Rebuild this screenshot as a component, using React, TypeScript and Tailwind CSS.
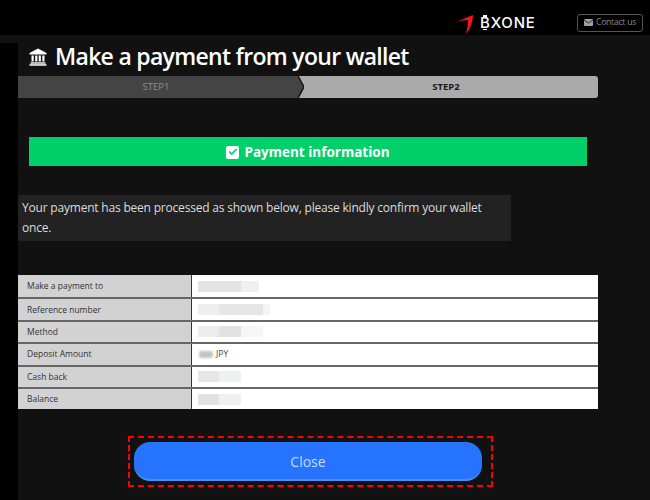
import { Check } from 'lucide-react'

const rows = [
  { label: 'Make a payment to', blur: [[43, 'bg-[#e4e4e4]'], [18, 'bg-[#f0f0f0]']] },
  { label: 'Reference number', blur: [[21, 'bg-[#eeeeee]'], [44, 'bg-[#e6e6e6]'], [7, 'bg-[#f4f4f4]']] },
  { label: 'Method', blur: [[21, 'bg-[#ececec]'], [22, 'bg-[#e2e2e2]'], [22, 'bg-[#f6f6f6]']] },
  { label: 'Deposit Amount', blur: [], amount: true },
  { label: 'Cash back', blur: [[21, 'bg-[#e6e6e6]'], [22, 'bg-[#eff1f1]']] },
  { label: 'Balance', blur: [[21, 'bg-[#e2e2e2]'], [22, 'bg-[#f0f0f0]']] },
] as { label: string; blur: [number, string][]; amount?: boolean }[]

function BankIcon() {
  return (
    <svg width="18" height="18" viewBox="0 0 18 18" fill="#fff" aria-hidden="true">
      <path d="M9 0.5 L17.5 5 V6.5 H0.5 V5 Z" />
      <rect x="2.5" y="7.5" width="2.2" height="6" />
      <rect x="6.2" y="7.5" width="2.2" height="6" />
      <rect x="9.7" y="7.5" width="2.2" height="6" />
      <rect x="13.3" y="7.5" width="2.2" height="6" />
      <rect x="1.5" y="14.3" width="15" height="1.4" />
      <rect x="0.5" y="16.2" width="17" height="1.5" />
    </svg>
  )
}

function Logo() {
  return (
    <div className="flex w-[83px] items-center">
      <svg width="20" height="21" viewBox="0 0 20 21" className="translate-y-[2px]" aria-hidden="true">
        <path d="M0 9 L19 1 C19 8 16 15 12 20 C13 15 14 11 14 6 C9 6 5 7 0 9 Z" fill="#f5151c" />
      </svg>
      <span className="relative ml-[6px] font-['Inter',sans-serif] text-[15px] font-medium tracking-[0.8px] text-white leading-none">
        BXONE
        <span className="absolute left-[3px] top-[0px] h-[1.5px] w-[4px] bg-white" />
        <span className="absolute bottom-[0px] left-[3px] h-[1.5px] w-[4px] bg-white" />
      </span>
    </div>
  )
}

export default function App() {
  return (
    <div className="flex h-[500px] w-[650px] flex-col overflow-hidden bg-[#111111] font-['Open_Sans',sans-serif]">
      <header className="flex h-[35px] shrink-0 items-center bg-black pl-[454px] pt-[10px]">
        <Logo />
        <div className="ml-[40px] flex h-[18px] w-[66px] items-center justify-center gap-[3px] rounded-[3px] border border-[#555555] text-[#8a8a8a]">
          <svg width="9" height="7" viewBox="0 0 9 7" aria-hidden="true">
            <rect width="9" height="7" rx="1" fill="#a0a0a0" />
            <path d="M0 1 L4.5 4 L9 1" fill="none" stroke="#000000" strokeWidth="0.7" />
          </svg>
          <span className="text-[8.5px] tracking-[-0.2px] leading-none">Contact us</span>
        </div>
      </header>

      <div className="flex flex-1">
        <div className="mt-[8px] w-[18px] shrink-0 bg-black" />

        <main className="w-[580px]">
          <h1 className="flex h-[41px] items-center gap-[8px] pl-[11px] pt-[2px] text-[23px] font-semibold tracking-[-0.7px] leading-none text-white">
            <BankIcon />
            <span>Make a payment from your wallet</span>
          </h1>

          <div className="flex h-[22px] overflow-hidden rounded-[3px] bg-[#aaaaaa] text-[9.5px] leading-none">
            <div className="flex w-[280px] items-center justify-center bg-[#444444] pr-[4px] text-[#8d8d8d]">STEP1</div>
            <svg width="6" height="22" viewBox="0 0 6 22" className="shrink-0" aria-hidden="true">
              <path d="M0 0 L6 11 L0 22 Z" fill="#444444" />
              <path d="M0 0 L6 11 L0 22" fill="none" stroke="#111111" strokeWidth="1.5" />
            </svg>
            <div className="flex flex-1 items-center justify-center pr-[10px] font-bold text-[#1a1a1a]">STEP2</div>
          </div>

          <div className="ml-[11px] mt-[39px] flex h-[29px] w-[558px] items-center justify-center gap-[5px] bg-[#00cf6a] pt-[1px] text-[13.5px] font-bold text-white">
            <span className="flex h-[13px] w-[13px] items-center justify-center rounded-[2px] bg-white">
              <Check size={10} strokeWidth={4} className="text-[#00cf6a]" />
            </span>
            <span>Payment information</span>
          </div>

          <p className="mt-[29px] flex h-[46px] w-[493px] items-center bg-[#222222] pl-[4px] pr-[20px] text-[12px] tracking-[-0.2px] leading-[20px] text-[#dddddd]">
            Your payment has been processed as shown below, please kindly confirm your wallet once.
          </p>

          <div className="mt-[34px] flex flex-col bg-white">
            {rows.map((row, i) => (
              <div key={row.label} className={`flex h-[22.4px] text-[8.5px] ${i > 0 ? 'border-t-2 border-[#666666]' : ''}`}>
                <div className="flex w-[174px] shrink-0 items-center border-r border-[#333333] bg-[#d2d2d2] pl-[9px] pt-[1px] text-[#333333]">
                  {row.label}
                </div>
                <div className="flex flex-1 items-center pl-[6px] text-[#444444]">
                  {row.amount ? (
                    <>
                      <span className="ml-[1px] mr-[3px] h-[7px] w-[14px] rounded-[2px] bg-[#c4c4c4] blur-[1px]" />
                      JPY
                    </>
                  ) : (
                    row.blur.map(([w, color], j) => (
                      <span key={j} className={`h-[11px] ${color}`} style={{ width: w }} />
                    ))
                  )}
                </div>
              </div>
            ))}
          </div>

          <div className="ml-[110px] mt-[27px] h-[51px] w-[365px] border-[2px] border-dashed border-[#ff0000] p-[4px]">
            <button className="flex h-[39px] w-[348px] items-center justify-center rounded-[16px] border-b-2 border-[#4f8dff] bg-[#2673ff] pt-[1px] text-[14px] text-[#c5dbff]">
              Close
            </button>
          </div>
        </main>
      </div>
    </div>
  )
}
